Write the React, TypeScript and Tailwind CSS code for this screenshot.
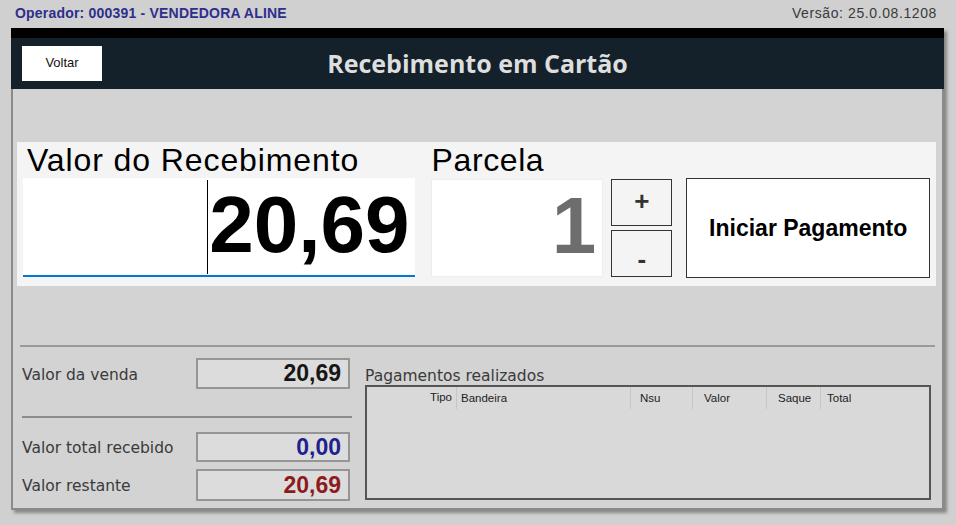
const valueBox =
  "flex items-center justify-end w-[154px] border-2 border-[#959595] bg-[#dcdcdc] pr-[7px] text-[23px] font-bold leading-none";

function SummaryRow({ label, value, color, h }: { label: string; value: string; color: string; h: string }) {
  return (
    <div className="flex items-center">
      <span className="w-[174px] pt-[4px] font-['DejaVu_Sans',sans-serif] text-[15.5px] text-[#3a3a3a]">{label}</span>
      <div className={`${valueBox} ${h} ${color}`}>{value}</div>
    </div>
  );
}

export default function App() {
  return (
    <div className="h-[525px] w-[956px] overflow-hidden bg-[#d0d0d0] font-['Liberation_Sans',Arial,sans-serif]">
      <div className="flex h-[28px] items-center justify-between pb-[2px] pl-[15px] pr-[19px]">
        <span className="text-[14px] font-bold tracking-[0.2px] text-[#2e2e8c]">Operador: 000391 - VENDEDORA ALINE</span>
        <span className="text-[14px] tracking-[0.6px] text-[#3a3a3a]">Versão: 25.0.08.1208</span>
      </div>

      <div className="ml-[11px] w-[933px] shadow-[3px_3px_3px_rgba(0,0,0,0.35)]">
        <div className="h-[10px] bg-black" />
        <div className="grid h-[51px] grid-cols-[1fr_auto_1fr] items-center bg-[#14212a]">
          <div>
            <button className="mb-[1px] ml-[11px] h-[35px] w-[80px] bg-white text-[13px] text-[#111]">Voltar</button>
          </div>
          <h1 className="font-['Open_Sans',sans-serif] text-[25px] font-bold text-[#dedede]">Recebimento em Cartão</h1>
          <div />
        </div>

        <div className="h-[421px] border-x-2 border-b-2 border-[#8a8a8a] bg-[#d3d3d3] pt-[53px]">
          {/* recebimento */}
          <div className="ml-[4px] mr-[6px] flex h-[144px] items-start bg-[#f4f4f4] px-[6px]">
            <div className="flex w-[392px] flex-col">
              <div className="mt-[3px] h-[31px] whitespace-nowrap pl-[4px] text-[32px] leading-[31px] tracking-[0.9px] text-black">
                Valor do Recebimento
              </div>
              <div className="mt-[2px] flex h-[99px] items-center justify-end border-b-2 border-[#0078d7] bg-white pb-[4px] pr-[5px]">
                <span className="mr-[1px] mt-[4px] h-[94px] w-[1px] bg-black" />
                <span className="text-[80px] font-bold leading-none text-black">20,69</span>
              </div>
            </div>

            <div className="ml-[16px] flex w-[173px] flex-col">
              <div className="mt-[3px] h-[31px] pl-[1px] text-[32px] leading-[31px] tracking-[0.6px] text-black">Parcela</div>
              <div className="mt-[3px] flex h-[98px] items-center justify-end border border-[#ededed] bg-white pb-[4px] pr-[6px]">
                <span className="text-[80px] font-bold leading-none text-[#6d6d6d]">1</span>
              </div>
            </div>

            <div className="ml-[8px] mt-[37px] flex w-[61px] flex-col gap-[4px]">
              <button className="flex h-[47px] items-center justify-center border border-[#333] bg-[#f4f4f4] pb-[3px] text-[26px] font-bold text-[#333]">
                +
              </button>
              <button className="flex h-[47px] items-end justify-center border border-[#333] bg-[#f4f4f4] pb-[4px] text-[26px] font-bold leading-none text-[#333]">
                -
              </button>
            </div>

            <button className="ml-[14px] mt-[36px] h-[100px] w-[244px] border border-[#333] bg-white text-[23px] font-bold text-black">
              Iniciar Pagamento
            </button>
          </div>

          <div className="mx-[7px] mt-[59px] h-[2px] bg-[#9a9a9a]" />

          {/* resumo */}
          <div className="flex">
            <div className="ml-[9px] w-[330px]">
              <div className="pt-[11px]">
                <SummaryRow label="Valor da venda" value="20,69" color="text-[#161616]" h="h-[31px]" />
              </div>
              <div className="mt-[27px] h-[2px] bg-[#8c8c8c]" />
              <div className="mt-[14px]">
                <SummaryRow label="Valor total recebido" value="0,00" color="text-[#1f1f8f]" h="h-[30px]" />
              </div>
              <div className="mt-[7px]">
                <SummaryRow label="Valor restante" value="20,69" color="text-[#8e1b1b]" h="h-[32px]" />
              </div>
            </div>

            <div className="ml-[13px] mr-[11px] flex-1 pt-[20px]">
              <div className="h-[18px] font-['DejaVu_Sans',sans-serif] text-[15.5px] leading-[18px] text-[#3a3a3a]">
                Pagamentos realizados
              </div>
              <div className="h-[115px] border-2 border-[#555] bg-[#d9d9d9]">
                <div className="flex h-[22px] items-center text-[11.5px] text-[#222]">
                  <div className="w-[89px] pr-[4px] text-right">Tipo</div>
                  <div className="h-full w-[174px] border-l border-[#c6c6c6] pl-[4px] leading-[22px]">Bandeira</div>
                  <div className="h-full w-[62px] border-l border-[#c6c6c6] pl-[9px] leading-[22px]">Nsu</div>
                  <div className="h-full w-[74px] border-l border-[#c6c6c6] pl-[11px] leading-[22px]">Valor</div>
                  <div className="h-full w-[54px] border-l border-[#c6c6c6] pl-[11px] leading-[22px]">Saque</div>
                  <div className="h-full flex-1 border-l border-[#c6c6c6] pl-[6px] leading-[22px]">Total</div>
                </div>
              </div>
            </div>
          </div>
        </div>
      </div>
    </div>
  );
}
